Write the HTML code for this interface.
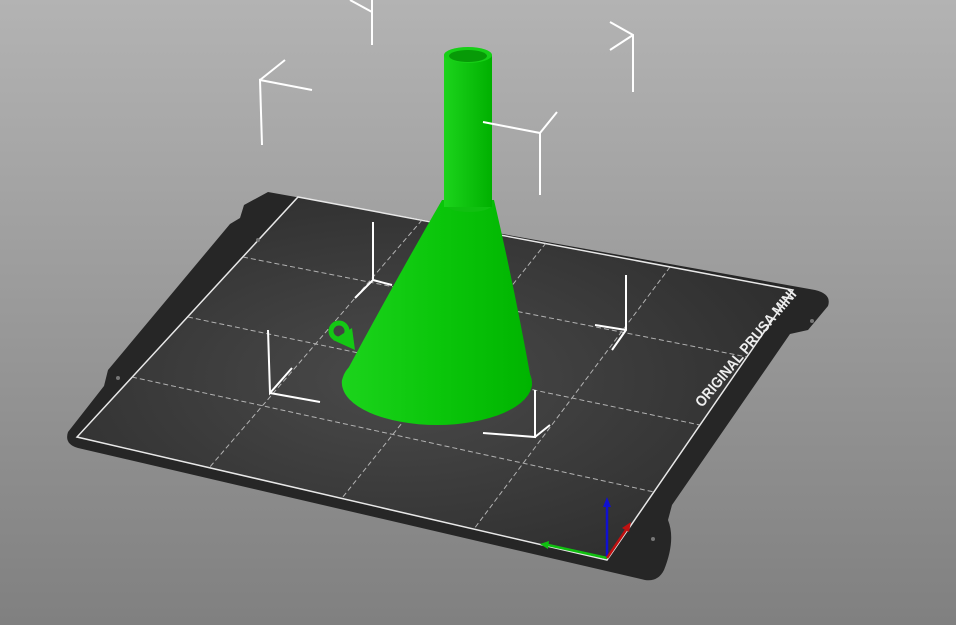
<!DOCTYPE html>
<html><head><meta charset="utf-8"><style>
html,body{margin:0;padding:0;width:956px;height:625px;overflow:hidden}
svg{display:block}
</style></head><body>
<svg width="956" height="625" viewBox="0 0 956 625" xmlns="http://www.w3.org/2000/svg">
<defs>
<linearGradient id="bg" x1="0" y1="0" x2="0" y2="1">
<stop offset="0" stop-color="#b3b3b3"/><stop offset="1" stop-color="#808080"/>
</linearGradient>
<radialGradient id="pl" cx="0.45" cy="0.5" r="0.6">
<stop offset="0" stop-color="#4a4a4a"/><stop offset="1" stop-color="#2e2e2e"/>
</radialGradient>
<linearGradient id="cone" x1="0" y1="0" x2="1" y2="0">
<stop offset="0" stop-color="#1cd41c"/><stop offset="0.5" stop-color="#0bc60b"/><stop offset="1" stop-color="#00b400"/>
</linearGradient>
<linearGradient id="tube" x1="0" y1="0" x2="1" y2="0">
<stop offset="0" stop-color="#1cd41c"/><stop offset="1" stop-color="#00b000"/>
</linearGradient>
</defs>
<rect width="956" height="625" fill="url(#bg)"/>
<path d="M268,192 L815,290 Q832,294 828,306 L808,330 L790,334 L672,505 L668,520 Q676,540 664,570 Q658,582 645,580 L78,448 Q64,444 68,432 L104,386 L108,370 L230,224 L240,218 L244,205 Z" fill="#262626"/>
<path d="M298,197 L793,290 L607,560 L77,437 Z" fill="url(#pl)" stroke="#e8e8e8" stroke-width="1.5"/>
<g stroke="#cfcfcf" stroke-width="1" stroke-dasharray="5,3" fill="none" opacity="0.8">
<line x1="243" y1="257" x2="747" y2="357"/>
<line x1="188" y1="317" x2="700" y2="425"/>
<line x1="132" y1="377" x2="654" y2="492"/>
<line x1="422" y1="220" x2="209" y2="468"/>
<line x1="546" y1="243" x2="342" y2="498"/>
<line x1="670" y1="267" x2="474" y2="529"/>
</g>
<text x="0" y="0" transform="translate(702,408) rotate(-50)" font-family="Liberation Sans, sans-serif" font-weight="bold" font-size="15" fill="#eee" textLength="148" lengthAdjust="spacingAndGlyphs">ORIGINAL PRUSA MINI</text>
<circle cx="118" cy="378" r="2" fill="#777"/>
<circle cx="812" cy="321" r="2" fill="#777"/>
<circle cx="653" cy="539" r="2" fill="#777"/>
<circle cx="258" cy="240" r="2" fill="#777"/>
<g stroke="#fff" stroke-width="2" fill="none">
<path d="M373,222 L373,280 L355,298 M373,280 L392,285"/>
<path d="M626,275 L626,330 L612,350 M626,330 L595,325"/>
<path d="M268,330 L270,393 L292,368 M270,393 L320,402"/>
</g>
<circle cx="339" cy="331" r="8" fill="none" stroke="#14c814" stroke-width="5"/>
<path d="M333,340 L355,350 L352,328 Z" fill="#14c814"/>
<path d="M442,200 L494,200 Q515,290 532,385 A95,40 0 0 1 342,380 Q390,290 442,200 Z" fill="url(#cone)"/>
<ellipse cx="437" cy="383" rx="95" ry="42" fill="url(#cone)"/>
<ellipse cx="469" cy="205" rx="23" ry="7" fill="#10c010"/>
<rect x="444" y="55" width="48" height="152" fill="url(#tube)"/>
<ellipse cx="468" cy="55" rx="24" ry="8" fill="#17cf17"/>
<ellipse cx="468" cy="56" rx="19" ry="6" fill="#079a07"/>
<g stroke="#fff" stroke-width="2" fill="none">
<path d="M535,390 L535,437 L483,433 M535,437 L550,425"/>
<path d="M312,90 L260,80 L262,145 M260,80 L285,60"/>
<path d="M610,22 L633,35 L633,92 M633,35 L610,50"/>
<path d="M483,122 L540,133 L540,195 M540,133 L557,112"/>
<path d="M372,0 L372,45 M350,0 L372,12"/>
</g>
<g stroke-width="2.5">
<line x1="607" y1="558" x2="607" y2="505" stroke="#1010d0"/>
<polygon points="603,507 611,507 607,497" fill="#1010d0"/>
<line x1="607" y1="558" x2="548" y2="545" stroke="#10c010"/>
<polygon points="549,541 548,549 540,544" fill="#10c010"/>
<line x1="607" y1="558" x2="626" y2="530" stroke="#c01010"/>
<polygon points="622,528 629,532 631,522" fill="#c01010"/>
</g>
</svg>
</body></html>
